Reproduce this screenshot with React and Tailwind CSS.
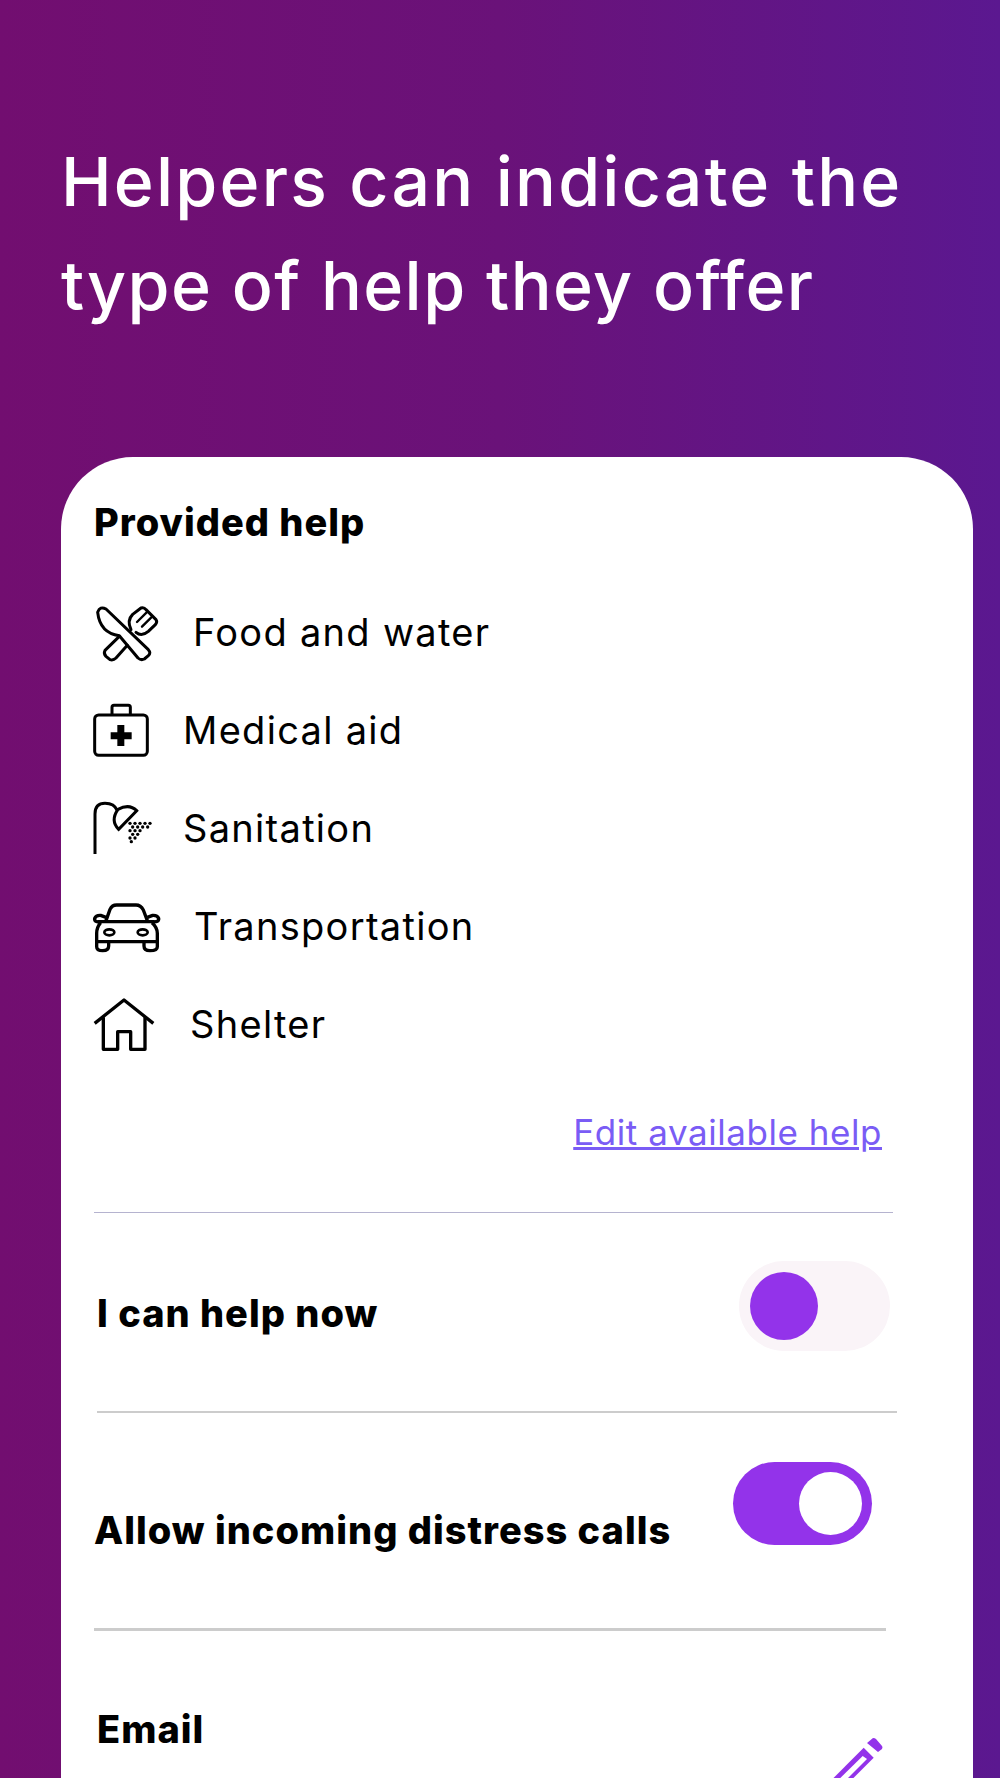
import React from 'react';

const dots = [];
for (let r = 0; r < 7; r++) {
  const count = 5 - Math.ceil(r * 0.7);
  for (let i = 0; i < count; i++) {
    dots.push([150 + (r % 2) * 8 + i * 15 - (r > 4 ? 4 : 0), 400 + r * 11]);
  }
}

function FoodIcon() {
  return (
    <svg width="70" height="70" viewBox="42 52 210 210" fill="none" stroke="black" strokeWidth="9" strokeLinejoin="round" strokeLinecap="round" className="overflow-visible">
      <path d="M53 98 Q60 78 78 88 L205 210 Q214 220 205 228 L193 238 Q183 243 174 235 L118 168 Q60 160 53 98 Z" />
      <path d="M118 170 L75 212 Q70 222 78 230 L90 240 Q100 243 108 235 L142 197" />
      <path d="M153 150 Q140 122 158 104 L183 85 Q192 82 198 90 L228 120 Q233 127 226 135 L205 155 Q185 172 168 158" />
      <path d="M171 127 L200 98 M186 141 L214 113" strokeWidth="7" />
    </svg>
  );
}

function MedicalIcon() {
  return (
    <svg width="70" height="70" viewBox="42 15 210 210" fill="none" stroke="black" strokeWidth="9" className="overflow-visible">
      <rect x="44" y="75" width="158" height="121" rx="12" />
      <path d="M96 75 V52 Q96 46 102 46 H145 Q151 46 151 52 V75" />
      <path d="M92 127 H112 V105 H133 V127 H155 V148 H133 V168 H112 V148 H92 Z" fill="black" stroke="none" />
    </svg>
  );
}

function ShowerIcon() {
  return (
    <svg width="70" height="70" viewBox="42 309 210 210" fill="none" stroke="black" strokeWidth="9" className="overflow-visible">
      <path d="M45 492 V372 Q45 340 75 340 Q103 340 112 362" />
      <path d="M114 358 Q148 340 170 362 L116 418 Q90 392 114 358 Z" />
      {dots.map(([cx, cy], i) => (
        <circle key={i} cx={cx} cy={cy} r="5" fill="black" stroke="none" />
      ))}
    </svg>
  );
}

function CarIcon() {
  return (
    <svg width="70" height="70" viewBox="42 33 210 210" fill="none" stroke="black" strokeWidth="10" strokeLinejoin="round" className="overflow-visible">
      <path d="M78 122 L90 88 Q96 75 110 75 H168 Q182 75 190 90 L202 122" />
      <path d="M52 125 H224" />
      <path d="M62 128 Q50 142 50 160 V200 Q50 212 68 212 Q86 212 86 198 V186" />
      <path d="M216 128 Q232 142 232 160 V200 Q232 212 210 212 Q192 212 192 198 V186" />
      <path d="M50 185 H232" />
      <path d="M62 125 Q42 128 44 115 Q48 105 62 106 L78 112" />
      <path d="M216 125 Q238 128 236 115 Q232 105 218 106 L202 112" />
      <ellipse cx="88" cy="157" rx="15" ry="9" strokeWidth="8" />
      <ellipse cx="188" cy="157" rx="15" ry="9" strokeWidth="8" />
    </svg>
  );
}

function HouseIcon() {
  return (
    <svg width="70" height="70" viewBox="42 327 210 210" fill="none" stroke="black" strokeWidth="10" strokeLinejoin="round" className="overflow-visible">
      <path d="M44 430 L132 360 L220 430" />
      <path d="M70 412 V508 H113 V455 H152 V508 H195 V412" />
    </svg>
  );
}

function PencilIcon() {
  return (
    <svg width="56" height="60" viewBox="0 0 56 60" className="mt-[29px] shrink-0 overflow-visible">
      <path d="M40 5 L46 0 Q48 0 49 1 L55 8 Q56 9 55 11 L51 14 Z" fill="#9333ea" />
      <path d="M36.7 9.7 L46.7 19.7 L10 56.5 L0 46.5 Z" fill="#9333ea" />
      <path d="M35.7 18 L40 21 L1 60 L-4 57 Z" fill="white" />
    </svg>
  );
}

const helpItems = [
  { label: 'Food and water', icon: <FoodIcon />, textClass: 'ml-[29px]' },
  { label: 'Medical aid', icon: <MedicalIcon />, textClass: 'ml-[19px]' },
  { label: 'Sanitation', icon: <ShowerIcon />, textClass: 'ml-[19px]' },
  { label: 'Transportation', icon: <CarIcon />, textClass: 'ml-[30px]' },
  { label: 'Shelter', icon: <HouseIcon />, textClass: 'ml-[26px]' },
];

export default function App() {
  return (
    <div className="h-[1778px] w-[1000px] overflow-hidden bg-[linear-gradient(90deg,#720e70_0%,#6a1279_50%,#5b1890_100%)] font-['Inter','Liberation_Sans',sans-serif] text-black">
      <h1 className="ml-[61px] pt-[129px] text-[68px] leading-[104px] font-medium text-white">
        <span className="block tracking-[2.2px]">Helpers can indicate the</span>
        <span className="block tracking-[1.4px]">type of help they offer</span>
      </h1>

      <div className="ml-[61px] mt-[120px] h-[1400px] w-[912px] rounded-[72px] bg-white pl-[33px] pt-[45px]">
        <h2 className="text-[38px] leading-[40px] font-extrabold tracking-[1px]">Provided help</h2>

        <ul className="mt-[41px]">
          {helpItems.map((item) => (
            <li key={item.label} className="flex h-[98px] items-center">
              <span className="flex w-[70px] shrink-0">{item.icon}</span>
              <span className={`text-[38px] leading-[40px] tracking-[1.3px] ${item.textClass}`}>{item.label}</span>
            </li>
          ))}
        </ul>

        <div className="mt-[39px] w-[788px] text-right text-[35px] leading-[40px] tracking-[0.55px] text-[#7a5cf5] underline">
          Edit available help
        </div>

        <div className="mt-[60px] h-px w-[799px] bg-[#b5b3cf]" />

        <div className="ml-[3px] mt-[48px] flex w-[793px] items-start justify-between">
          <span className="mt-[32px] text-[38px] leading-[40px] font-extrabold tracking-[1px]">I can help now</span>
          <div className="flex h-[90px] w-[151px] items-center rounded-full bg-[#faf4f8] pl-[11px]">
            <div className="h-[68px] w-[68px] rounded-full bg-[#9333ea]" />
          </div>
        </div>

        <div className="ml-[3px] mt-[60px] h-[2px] w-[800px] bg-[#cccccc]" />

        <div className="mt-[49px] flex w-[778px] items-start justify-between">
          <span className="mt-[48px] text-[38px] leading-[40px] font-extrabold tracking-[1px]">Allow incoming distress calls</span>
          <div className="flex h-[83px] w-[139px] items-center justify-end rounded-full bg-[#9333ea] pr-[10px]">
            <div className="h-[63px] w-[63px] rounded-full bg-white" />
          </div>
        </div>

        <div className="mt-[78px] h-[3px] w-[792px] bg-[#cccccc]" />

        <div className="ml-[3px] mt-[78px] flex w-[786px] items-start justify-between">
          <span className="text-[38px] leading-[40px] font-extrabold tracking-[1px]">Email</span>
          <PencilIcon />
        </div>
      </div>
    </div>
  );
}
